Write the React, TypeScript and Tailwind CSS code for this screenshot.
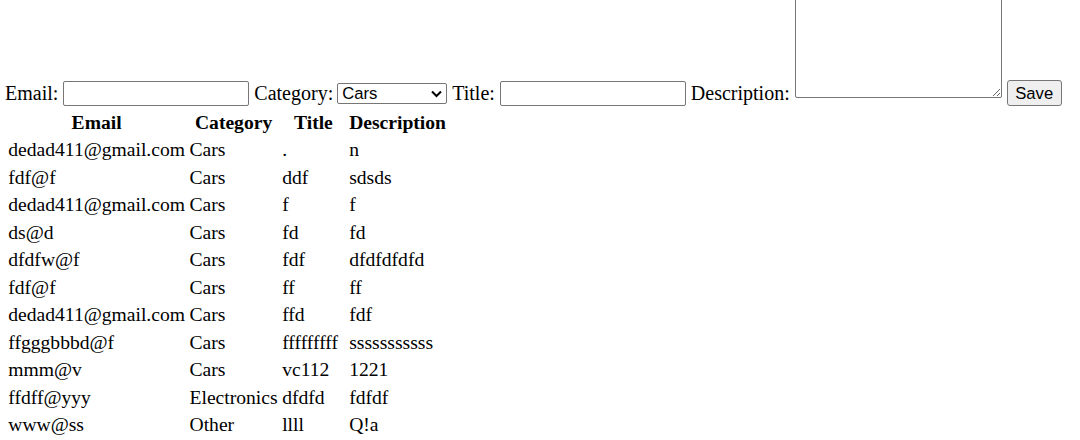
const ROWS = [
  ['dedad411@gmail.com', 'Cars', '.', 'n'],
  ['fdf@f', 'Cars', 'ddf', 'sdsds'],
  ['dedad411@gmail.com', 'Cars', 'f', 'f'],
  ['ds@d', 'Cars', 'fd', 'fd'],
  ['dfdfw@f', 'Cars', 'fdf', 'dfdfdfdfd'],
  ['fdf@f', 'Cars', 'ff', 'ff'],
  ['dedad411@gmail.com', 'Cars', 'ffd', 'fdf'],
  ['ffgggbbbd@f', 'Cars', 'fffffffff', 'sssssssssss'],
  ['mmm@v', 'Cars', 'vc112', '1221'],
  ['ffdff@yyy', 'Electronics', 'dfdfd', 'fdfdf'],
  ['www@ss', 'Other', 'llll', 'Q!a'],
]

export default function App() {
  return (
    <div className="bg-white w-[1080px] h-[440px] overflow-hidden pl-[5px] text-black font-['Liberation_Serif',serif] text-[20px]">
      <form className="flex items-end gap-[5px] -mt-[6px] h-[116px] pb-[4px]">
        <label className="leading-[23px] mb-[1px]">Email:</label>
        <input className="w-[186px] h-[25px] border border-[#767676] rounded-[2px] px-[2px] text-[16.67px] font-['Liberation_Sans',sans-serif]" />
        <label className="leading-[23px] mb-[1px]">Category:</label>
        <div className="relative w-[110px] h-[21px] mb-[2px] -ml-[1px] border border-[#767676] rounded-[2px] flex items-center pl-[4px] text-[16.67px] font-['Liberation_Sans',sans-serif]">
          <span>Cars</span>
          <svg className="absolute right-[4px] top-[6px]" width="11" height="8" viewBox="0 0 11 8">
            <path d="M1 1.5 L5.5 6 L10 1.5" fill="none" stroke="#000" strokeWidth="2" />
          </svg>
        </div>
        <label className="leading-[23px] mb-[1px]">Title:</label>
        <input className="w-[186px] h-[25px] border border-[#767676] rounded-[2px] px-[2px] text-[16.67px] font-['Liberation_Sans',sans-serif]" />
        <label className="leading-[23px] mb-[1px]">Description:</label>
        <textarea className="w-[207px] h-[104px] mb-[8px] border border-[#767676] rounded-[2px] resize" />
        <button
          type="button"
          className="w-[55px] h-[26px] border border-[#767676] rounded-[3px] bg-[#efefef] text-[16.67px] font-['Liberation_Sans',sans-serif] text-black"
        >
          Save
        </button>
      </form>
      <table className="border-separate border-spacing-[2.5px] -mt-[2.5px] leading-[23px] text-[19.6px]">
        <thead>
          <tr>
            <th className="px-[1.25px] py-[1.25px] font-bold text-center">Email</th>
            <th className="px-[1.25px] py-[1.25px] font-bold text-center">Category</th>
            <th className="w-[65px] px-[1.25px] py-[1.25px] font-bold text-center">Title</th>
            <th className="px-[1.25px] py-[1.25px] font-bold text-center">Description</th>
          </tr>
        </thead>
        <tbody>
          {ROWS.map((r, i) => (
            <tr key={i}>
              {r.map((c, j) => (
                <td key={j} className="px-[1.25px] py-[1.25px] whitespace-nowrap">
                  {c}
                </td>
              ))}
            </tr>
          ))}
        </tbody>
      </table>
    </div>
  )
}
